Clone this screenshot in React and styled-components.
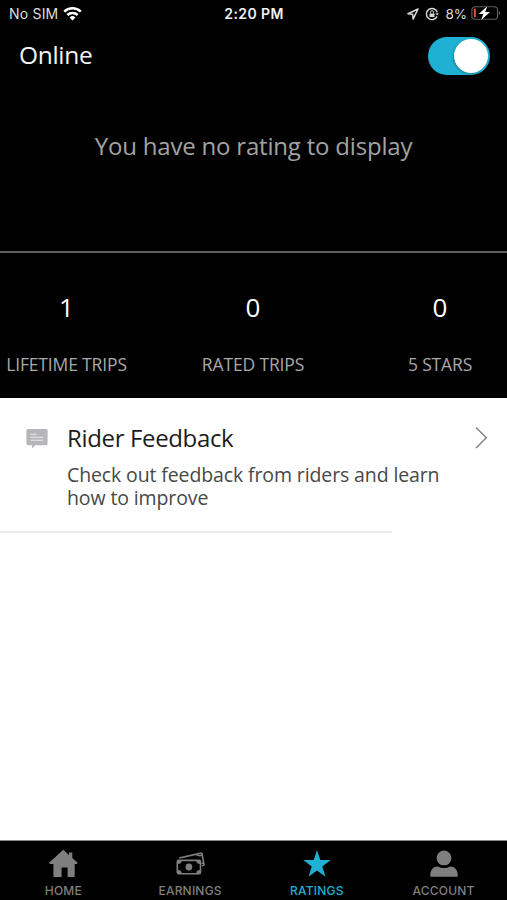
import React from "react"
import styled, { createGlobalStyle } from "styled-components"

const colors = {
    black: `#000`,
    white: `#fff`,
    blue: `#1fb1d3`,
    grey: `#7f7f7f`,
}

const GlobalStyle = createGlobalStyle`
    * {
        box-sizing: border-box;
    }
    body {
        margin: 0;
        background: ${ colors.white };
    }
`

const Screen = styled.div`
    display: flex;
    flex-direction: column;
    height: 900px;
    overflow: hidden;
    font-family: "Open Sans", "Noto Sans", sans-serif;
`

const StatusBar = styled.div`
    display: grid;
    grid-template-columns: 1fr auto 1fr;
    align-items: center;
    height: 28px;
    padding: 0 6px 0 9px;
    background: ${ colors.black };
    color: #dedede;
    font-family: Inter, sans-serif;
    font-size: 13.5px;
    line-height: 28px;
    white-space: nowrap;
`

const Carrier = styled.div`
    display: flex;
    align-items: center;
    gap: 5px;
    font-size: 14px;
    letter-spacing: 0.2px;
`

const Clock = styled.div`
    margin-right: 2px;
    color: #f2f2f2;
    font-size: 14px;
    font-weight: 600;
    letter-spacing: 0.4px;
`

const Indicators = styled.div`
    display: flex;
    align-items: center;
    justify-content: flex-end;
`

const Percent = styled.span`
    margin: 0 4px 0 6px;
`

const Header = styled.header`
    display: flex;
    align-items: flex-start;
    justify-content: space-between;
    height: 72px;
    padding: 9px 17px 0 19px;
    background: ${ colors.black };
`

const Title = styled.h1`
    margin: 0;
    color: #f4f4f4;
    font-size: 24.5px;
    font-weight: 400;
    line-height: 36px;
    letter-spacing: -0.3px;
`

const Toggle = styled.button`
    display: flex;
    justify-content: flex-end;
    width: 62px;
    height: 38px;
    padding: 2px;
    border: 0;
    border-radius: 19px;
    background: ${ colors.blue };
`

const Knob = styled.span`
    width: 34px;
    height: 34px;
    border-radius: 50%;
    background: ${ colors.white };
    box-shadow: -1px 1px 2px rgba(0, 0, 0, 0.25);
`

const Rating = styled.section`
    height: 151px;
    padding-top: 30px;
    background: ${ colors.black };
    color: #a2a2a2;
    font-size: 24px;
    line-height: 32px;
    letter-spacing: -0.2px;
    text-align: center;
    white-space: nowrap;
`

const Stats = styled.section`
    display: grid;
    grid-template-columns: 133px 240px 134px;
    height: 147px;
    border-top: 2px solid #606060;
    background: ${ colors.black };
    text-align: center;
    white-space: nowrap;
`

const StatValue = styled.div`
    margin-top: 36px;
    color: ${ colors.white };
    font-size: 26px;
    line-height: 36px;
`

const StatLabel = styled.div`
    margin-top: 27px;
    color: #a8a8a8;
    font-size: 17.5px;
    line-height: 24px;
    letter-spacing: -0.15px;
`

const Content = styled.main`
    flex: 1;
    background: ${ colors.white };
`

const ListRow = styled.div`
    display: grid;
    grid-template-columns: 41px 1fr 14px;
    height: 133px;
    padding: 24px 19px 0 26px;
`

const RowTitle = styled.h2`
    margin: 0;
    color: #1c1c1c;
    font-size: 24px;
    font-weight: 400;
    line-height: 32px;
    letter-spacing: -0.35px;
`

const RowText = styled.p`
    max-width: 385px;
    margin: 9px 0 0;
    color: #484848;
    font-size: 19.5px;
    line-height: 23px;
    letter-spacing: -0.12px;
`

const Divider = styled.div`
    width: 392px;
    height: 2px;
    background: #ececec;
`

const TabBar = styled.nav`
    display: grid;
    grid-template-columns: repeat(4, 1fr);
    height: 60px;
    border-top: 1px solid #8a8a8a;
    background: ${ colors.black };
`

const Tab = styled.div`
    display: flex;
    flex-direction: column;
    align-items: center;
    padding-top: 8px;
    color: ${ props => props.$active ? colors.blue : colors.grey };
    font-family: Inter, sans-serif;
    font-size: 12px;
    font-weight: 500;
    line-height: 16px;
    letter-spacing: 0.2px;

    svg {
        display: block;
        margin-bottom: 5px;
    }
`

const WifiIcon = () => (
    <svg width="19" height="15" viewBox="0 0 19 15" fill="none" stroke="#fff" strokeWidth="2.5" style={{ marginTop: -2 }}>
        <path d="M1.2 5.6a12 12 0 0 1 16.6 0" />
        <path d="M4.3 9a7.5 7.5 0 0 1 10.4 0" />
        <path d="M9.5 14.4l-2.9-3a4.2 4.2 0 0 1 5.8 0z" fill="#fff" stroke="none" />
    </svg>
)

const LocationIcon = () => (
    <svg width="12" height="12" viewBox="0 0 12 12" fill="none" stroke="#d8d8d8" strokeWidth="1.5" strokeLinejoin="round">
        <path d="M11 1L1 5.7l4.7.6.4 4.8z" />
    </svg>
)

const LockIcon = () => (
    <svg width="14" height="14" viewBox="0 0 14 14" fill="none" stroke="#d8d8d8" strokeWidth="1.4" style={{ marginLeft: 6 }}>
        <path d="M12.3 5.2A5.6 5.6 0 1 0 12.1 9.4" />
        <path d="M10.3 6.2h3.5l-1.7 2.4z" fill="#d8d8d8" stroke="none" />
        <rect x="4.5" y="6.4" width="5" height="3.7" rx="0.5" fill="#d8d8d8" stroke="none" />
        <path d="M5.5 6.5V5.2a1.5 1.5 0 0 1 3 0v1.3" strokeWidth="1" />
    </svg>
)

const BatteryIcon = () => (
    <svg width="30" height="16" viewBox="0 0 30 16" style={{ marginTop: -2 }}>
        <rect x="0.9" y="1.7" width="25.6" height="12.6" rx="3.4" fill="none" stroke="#606060" strokeWidth="1.1" />
        <rect x="2.8" y="3.6" width="2" height="8.8" rx="0.8" fill="#ed4b3f" />
        <path d="M27.8 5.6a3 3 0 0 1 0 4.8z" fill="#606060" />
        <path d="M16.4 1L7.8 9h4.5l-2.2 6.2L19 7.1h-4.8z" fill="#fff" stroke="#000" strokeWidth="1" paintOrder="stroke" />
    </svg>
)

const FeedbackIcon = () => (
    <svg width="22" height="20" viewBox="0 0 22 20" style={{ marginTop: 7 }}>
        <path d="M2 0h18a1.6 1.6 0 0 1 1.6 1.6v13a1.6 1.6 0 0 1-1.6 1.6H9.2L6 19.5v-3.3H2a1.6 1.6 0 0 1-1.6-1.6v-13A1.6 1.6 0 0 1 2 0z" fill="#b6b6ba" />
        <path d="M4.5 5.3h6M4.5 8.3h12.8M4.5 11.3h12.8" stroke="#e9e9eb" strokeWidth="1.1" />
    </svg>
)

const ChevronIcon = () => (
    <svg width="14" height="24" viewBox="0 0 14 24" fill="none" stroke="#858585" strokeWidth="1.5" style={{ marginTop: 4 }}>
        <path d="M2 1.5L12.3 11.8 2 22" />
    </svg>
)

const HomeIcon = () => (
    <svg width="30" height="29" viewBox="0 0 30 29" fill="currentColor">
        <path d="M15.3.8L21 5.9V3.4h3.3v5.5l5.300 4.900-.8 1.200h-2.100v12a1 1 0 0 1-1 1h-6.100v-9.600h-6V28H6.400a1 1 0 0 1-1-1V15H1.900L1 13.800z" />
    </svg>
)

const EarningsIcon = () => (
    <svg width="30" height="29" viewBox="0 0 30 29" fill="none" stroke="currentColor">
        <path d="M4.2 9L26 4.1a.8.8 0 0 1 1 .6l2 10.8a.9.9 0 0 1-.7 1l-1.3.2" strokeWidth="1.6" />
        <path d="M21 5.5c2.5 1.7 5 1.4 6.5.4M28.7 14l-2.2.6" strokeWidth="1.5" />
        <rect x="2.3" y="11.4" width="23.2" height="13.3" rx="1.4" strokeWidth="1.6" />
        <path d="M3 11.8h3.8A3.8 3.8 0 0 1 3 15zM25 11.8h-3.8a3.8 3.8 0 0 0 3.8 3.2zM3 24.3h3.8A3.8 3.8 0 0 0 3 21.1zM25 24.3h-3.8a3.8 3.8 0 0 1 3.8-3.2z" fill="currentColor" stroke="none" />
        <circle cx="13.9" cy="18" r="3.4" fill="currentColor" stroke="none" />
    </svg>
)

const StarIcon = () => (
    <svg width="30" height="29" viewBox="0 0 30 29" fill="currentColor">
        <path d="M15 1l3.3 10.1h10.4l-8.4 6.3 3.2 10.3L15 21.4l-8.5 6.3 3.2-10.3-8.4-6.3h10.4z" />
    </svg>
)

const AccountIcon = () => (
    <svg width="30" height="29" viewBox="0 0 30 29" fill="currentColor">
        <circle cx="15" cy="8.9" r="7.4" />
        <path d="M1.3 27.8v-2.1c0-4.8 3.2-8.3 7.5-8.3 2 1 3.9 1.5 6.2 1.5s4.2-.5 6.2-1.5c4.3 0 7.5 3.5 7.5 8.3v2.1z" />
    </svg>
)

const App = () => (
    <Screen>
        <GlobalStyle />
        <StatusBar>
            <Carrier>
                <span>No SIM</span>
                <WifiIcon />
            </Carrier>
            <Clock>2:20 PM</Clock>
            <Indicators>
                <LocationIcon />
                <LockIcon />
                <Percent>8%</Percent>
                <BatteryIcon />
            </Indicators>
        </StatusBar>
        <Header>
            <Title>Online</Title>
            <Toggle role="switch" aria-checked="true" aria-label="Online">
                <Knob />
            </Toggle>
        </Header>
        <Rating>You have no rating to display</Rating>
        <Stats>
            <div>
                <StatValue>1</StatValue>
                <StatLabel>LIFETIME TRIPS</StatLabel>
            </div>
            <div>
                <StatValue>0</StatValue>
                <StatLabel>RATED TRIPS</StatLabel>
            </div>
            <div>
                <StatValue>0</StatValue>
                <StatLabel>5 STARS</StatLabel>
            </div>
        </Stats>
        <Content>
            <ListRow>
                <FeedbackIcon />
                <div>
                    <RowTitle>Rider Feedback</RowTitle>
                    <RowText>Check out feedback from riders and learn how to improve</RowText>
                </div>
                <ChevronIcon />
            </ListRow>
            <Divider />
        </Content>
        <TabBar>
            <Tab>
                <HomeIcon />
                HOME
            </Tab>
            <Tab>
                <EarningsIcon />
                EARNINGS
            </Tab>
            <Tab $active>
                <StarIcon />
                RATINGS
            </Tab>
            <Tab>
                <AccountIcon />
                ACCOUNT
            </Tab>
        </TabBar>
    </Screen>
)

export default App
